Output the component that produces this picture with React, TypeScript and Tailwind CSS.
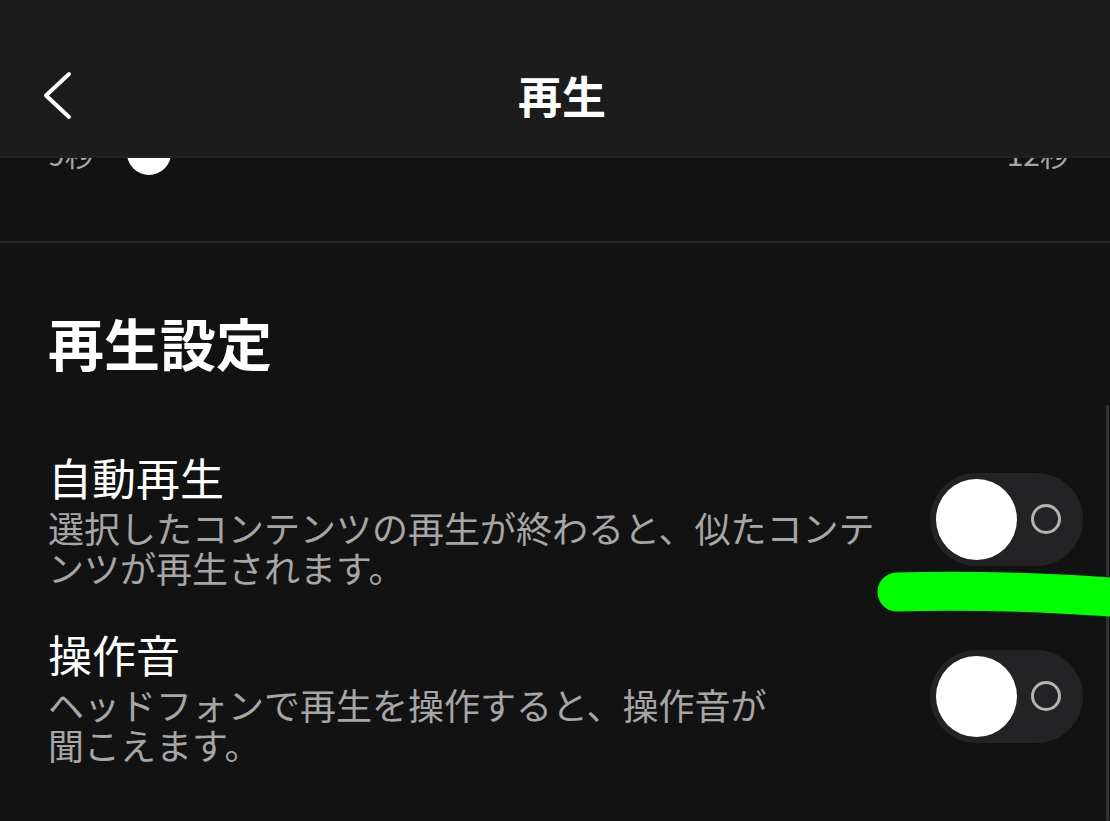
import React from "react";

function Toggle() {
  return (
    <button className="flex h-[93px] w-[153px] shrink-0 items-center rounded-full bg-[#232325] pl-[6px]">
      <span className="h-[81px] w-[81px] rounded-full bg-white" />
      <span className="ml-[14px] h-[30px] w-[30px] rounded-full border-[3px] border-[#b3b3b3]" />
    </button>
  );
}

const items = [
  {
    title: "自動再生",
    lines: ["選択したコンテンツの再生が終わると、似たコンテ", "ンツが再生されます。"],
  },
  {
    title: "操作音",
    lines: ["ヘッドフォンで再生を操作すると、操作音が", "聞こえます。"],
  },
];

export default function App() {
  return (
    <div className="relative h-[821px] w-[1110px] overflow-hidden bg-[#121212] font-['Noto_Sans_CJK_JP','Noto_Sans',sans-serif] text-white">
      {/* Header */}
      <header className="h-[158px] border-b-2 border-[#222222] bg-[#1c1c1c] pt-[58px]">
        <div className="grid h-[80px] grid-cols-[1fr_auto_1fr] items-center">
          <button className="ml-[40px] justify-self-start">
            <svg width="34" height="54" viewBox="0 0 34 54" fill="none">
              <polyline
                points="29,3 6,24.5 29,46"
                stroke="white"
                strokeWidth="4"
                strokeLinecap="round"
                strokeLinejoin="round"
              />
            </svg>
          </button>
          <h1 className="-mt-[6px] ml-[14px] text-[44px] font-bold leading-[56px]">再生</h1>
          <div />
        </div>
      </header>

      <main className="overflow-hidden">
        {/* Slider row, scrolled under the header */}
        <div className="-mt-[27px] flex h-[44px] items-center pl-12 pr-[40px] text-[30px] leading-[36px] text-[#a6a6a6]">
          <span className="w-[79px]">9秒</span>
          <div className="flex-1">
            <div className="h-[44px] w-[44px] rounded-full bg-white" />
          </div>
          <span>12秒</span>
        </div>

        <div className="mt-[66px] h-[2px] bg-[#2b2b2b]" />

        <section className="pl-12 pr-[27px] pt-[67px]">
          <h2 className="text-[56px] font-bold leading-[64px]">再生設定</h2>

          <div className="mt-[77px] flex flex-col gap-[41px]">
            {items.map((item) => (
              <div key={item.title} className="flex items-center justify-between">
                <div className="whitespace-nowrap">
                  <p className="text-[44px] leading-[52px]">{item.title}</p>
                  <p className="mt-[4px] text-[36px] leading-[40px] text-[#a6a6a6]">
                    {item.lines[0]}
                    <br />
                    {item.lines[1]}
                  </p>
                </div>
                <Toggle />
              </div>
            ))}
          </div>
        </section>
      </main>

      {/* Scroll indicator */}
      <div className="absolute bottom-0 right-[1px] top-[405px] w-[3px] rounded-full bg-[#343436]" />

      {/* Hand-drawn highlight */}
      <svg className="pointer-events-none absolute inset-0" width="1110" height="821" viewBox="0 0 1110 821">
        <path
          d="M897 592 Q1000 589 1125 598"
          stroke="#00ff00"
          strokeWidth="39"
          strokeLinecap="round"
          fill="none"
        />
      </svg>
    </div>
  );
}
